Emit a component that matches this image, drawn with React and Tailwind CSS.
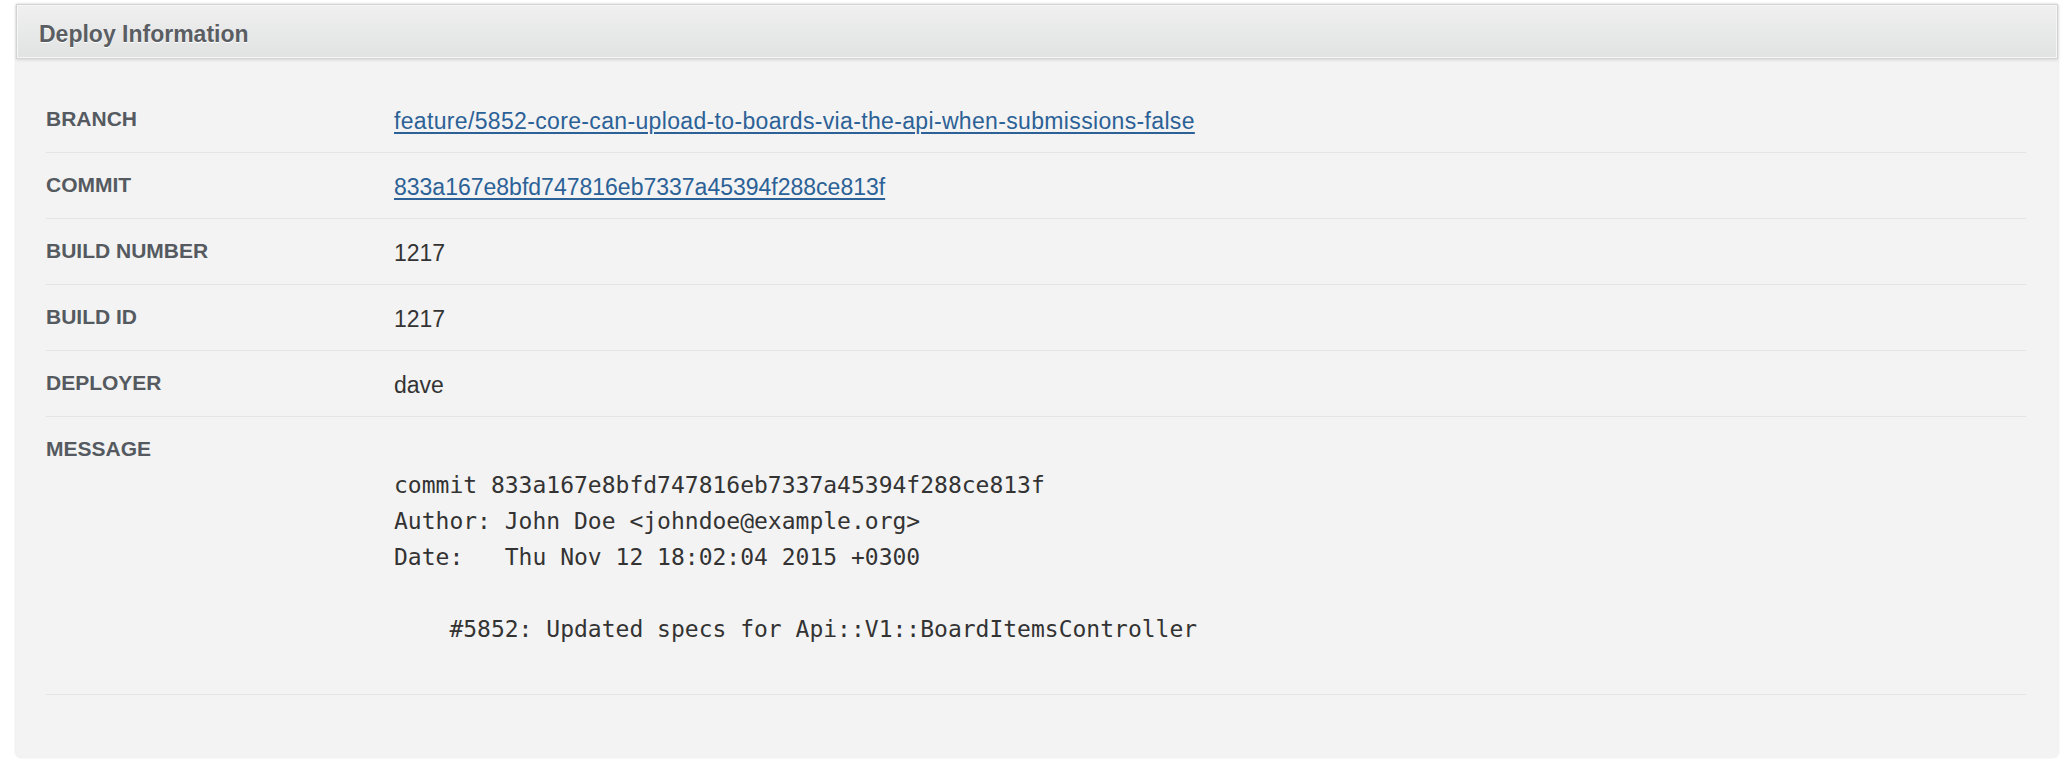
import React from "react";

const rows = [
  { label: "Branch", value: "feature/5852-core-can-upload-to-boards-via-the-api-when-submissions-false", link: true, wide: true },
  { label: "Commit", value: "833a167e8bfd747816eb7337a45394f288ce813f", link: true },
  { label: "Build Number", value: "1217" },
  { label: "Build ID", value: "1217" },
  { label: "Deployer", value: "dave" },
];

const message =
  "\ncommit 833a167e8bfd747816eb7337a45394f288ce813f\nAuthor: John Doe <johndoe@example.org>\nDate:   Thu Nov 12 18:02:04 2015 +0300\n\n    #5852: Updated specs for Api::V1::BoardItemsController";

export default function App() {
  return (
    <div className="min-h-[772px] bg-white pt-[4px] pl-[16px] pr-[12px] font-['Liberation_Sans',Arial,sans-serif]">
      <div className="rounded-b-[5px] bg-[#f3f3f3] shadow-[0_0_3px_rgba(0,0,0,0.16)]">
        <div className="flex h-[55px] items-center border border-[#d4d4d4] bg-gradient-to-b from-[#f0f0f0] to-[#e1e2e2] px-[22px] pt-[5px] shadow-[inset_0_0_0_1px_#f6f6f6,0_1px_3px_rgba(0,0,0,0.12)]">
          <h2 className="text-[23px] font-bold text-[#5a5e63] [text-shadow:0_1px_0_#ffffff]">
            Deploy Information
          </h2>
        </div>
        <div className="pl-[30px] pr-[32px] pt-[28px] pb-[62px]">
          {rows.map((r) => (
            <div
              key={r.label}
              className="flex h-[66px] items-start border-b border-[#e4e4e4] pt-[14px] leading-[35px]"
            >
              <div className="w-[348px] shrink-0 text-[21px] font-bold uppercase text-[#555a60]">
                {r.label}
              </div>
              <div className="pt-[3px] text-[23px] text-[#333333]">
                {r.link ? (
                  <a
                    href="#"
                    className={`text-[#2b6196] underline decoration-[1.5px] underline-offset-[3px] ${r.wide ? "tracking-[0.34px]" : ""}`}
                  >
                    {r.value}
                  </a>
                ) : (
                  r.value
                )}
              </div>
            </div>
          ))}
          <div className="flex items-start border-b border-[#e4e4e4] pt-[14px] pb-[13px]">
            <div className="w-[348px] shrink-0 text-[21px] font-bold uppercase leading-[35px] text-[#555a60]">
              Message
            </div>
            <pre className="m-0 whitespace-pre pb-[34px] text-[23px] leading-[36px] text-[#333333] font-['DejaVu_Sans_Mono',monospace]">
              {message}
            </pre>
          </div>
        </div>
      </div>
    </div>
  );
}
